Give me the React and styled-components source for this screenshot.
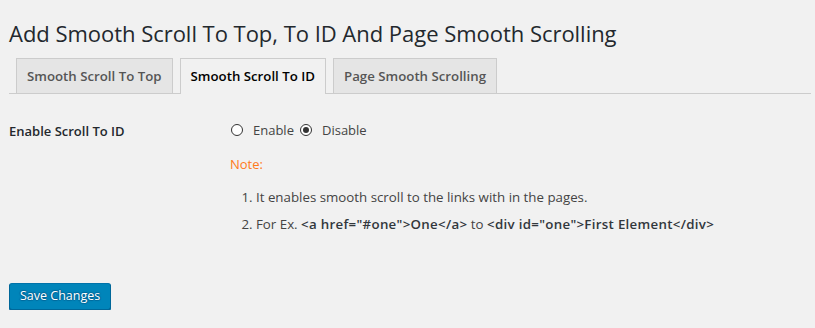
import React from "react";
import styled, { createGlobalStyle } from "styled-components";

const Global = createGlobalStyle`
  html, body { margin: 0; padding: 0; background: #f1f1f1; }
  body { font-family: "Open Sans", "Noto Sans", sans-serif; color: #444; }
`;

const Wrap = styled.div`
  padding: 18px 4px 0 9px;
`;

const Title = styled.h1`
  margin: 0;
  font-size: 22px;
  letter-spacing: -0.03px;
  font-weight: 400;
  line-height: 30px;
  color: #23282d;
`;

const TabBar = styled.div`
  display: flex;
  align-items: flex-end;
  margin-top: 10px;
  padding-left: 7px;
  gap: 7px;
  border-bottom: 1px solid #ccc;
`;

const Tab = styled.a`
  display: block;
  padding: 5px 10px;
  font-size: 13.25px;
  line-height: 24px;
  font-weight: 600;
  border: 1px solid #ccc;
  border-bottom: none;
  background: ${(p) => (p.$active ? "#f1f1f1" : "#e5e5e5")};
  color: ${(p) => (p.$active ? "#000" : "#555")};
  margin-bottom: ${(p) => (p.$active ? "-1px" : "0")};
  padding-bottom: ${(p) => (p.$active ? "6px" : "5px")};
  text-decoration: none;
  white-space: nowrap;
`;

const FormRow = styled.div`
  display: grid;
  grid-template-columns: 221px 1fr;
  margin-top: 25px;
`;

const Label = styled.div`
  font-size: 13px;
  font-weight: 600;
  color: #23282d;
  line-height: 22px;
  padding-top: 1px;
`;

const Field = styled.div`
  display: flex;
  flex-direction: column;
`;

const Radios = styled.div`
  display: flex;
  align-items: center;
  font-size: 13px;
  line-height: 22px;
  color: #444;
`;

const RadioLabel = styled.label`
  display: flex;
  align-items: center;
  margin-right: 5px;
`;

const RadioDot = styled.span`
  box-sizing: border-box;
  width: 12px;
  height: 12px;
  border-radius: 50%;
  border: 1px solid #333;
  background: #fff;
  margin: 0 10px 0 1px;
  display: inline-flex;
  align-items: center;
  justify-content: center;
  &::after {
    content: "";
    width: 6px;
    height: 6px;
    border-radius: 50%;
    background: ${(p) => (p.$checked ? "#333" : "transparent")};
  }
`;

const Note = styled.div`
  margin-top: 12px;
  font-size: 13px;
  line-height: 22px;
  color: #ff7a1a;
`;

const List = styled.ol`
  margin: 12px 0 0 0;
  padding-left: 26px;
  font-size: 13.3px;
  line-height: 21px;
  color: #444;
  li { margin-bottom: 6px; }
`;

const Code = styled.b`
  font-weight: 600;
  letter-spacing: 0.3px;
  color: #32373c;
`;

const Submit = styled.div`
  margin-top: 42px;
`;

const Button = styled.button`
  font-family: inherit;
  font-size: 12.5px;
  height: 27px;
  line-height: 24px;
  padding: 0 10px 1px;
  color: #fff;
  background: #0085ba;
  border: 1px solid;
  border-color: #0073aa #006799 #006799;
  border-radius: 3px;
  box-shadow: 0 1px 0 #006799;
  text-shadow: 0 -1px 1px #006799, 1px 0 1px #006799, 0 1px 1px #006799, -1px 0 1px #006799;
  cursor: pointer;
`;

export default function App() {
  return (
    <>
      <Global />
      <Wrap>
        <Title>Add Smooth Scroll To Top, To ID And Page Smooth Scrolling</Title>
        <TabBar>
          <Tab>Smooth Scroll To Top</Tab>
          <Tab $active>Smooth Scroll To ID</Tab>
          <Tab>Page Smooth Scrolling</Tab>
        </TabBar>
        <FormRow>
          <Label>Enable Scroll To ID</Label>
          <Field>
            <Radios>
              <RadioLabel><RadioDot />Enable</RadioLabel>
              <RadioLabel><RadioDot $checked />Disable</RadioLabel>
            </Radios>
            <Note>Note:</Note>
            <List>
              <li>It enables smooth scroll to the links with in the pages.</li>
              <li>
                For Ex. <Code>&lt;a href="#one"&gt;One&lt;/a&gt;</Code> to{" "}
                <Code>&lt;div id="one"&gt;First Element&lt;/div&gt;</Code>
              </li>
            </List>
          </Field>
        </FormRow>
        <Submit>
          <Button>Save Changes</Button>
        </Submit>
      </Wrap>
    </>
  );
}
